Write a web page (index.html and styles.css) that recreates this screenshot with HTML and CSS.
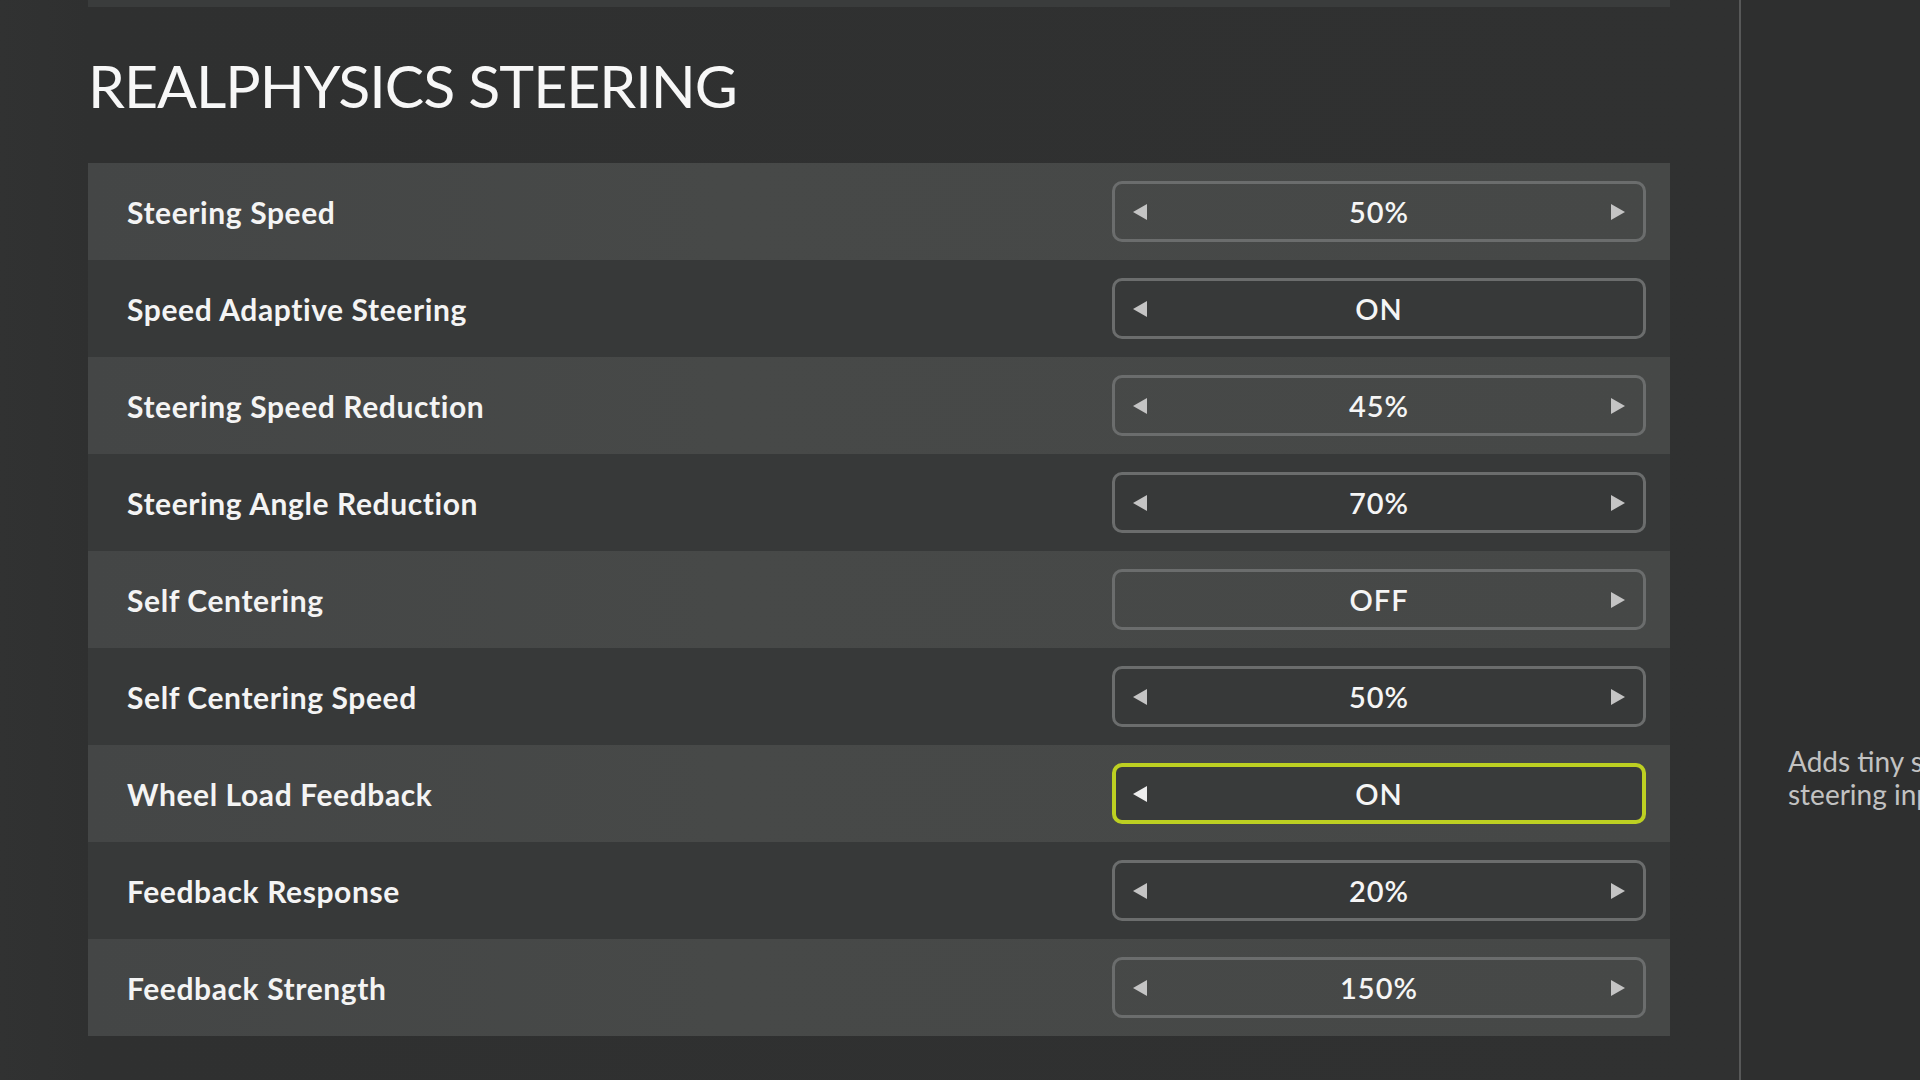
FILE: index.html
```html
<!DOCTYPE html>
<html lang="en">
<head>
<meta charset="utf-8">
<title>RealPhysics Steering</title>
<link rel="stylesheet" href="styles.css">
</head>
<body>
<div class="screen">
  <main class="main">
    <div class="topband"></div>
    <h1 class="title">REALPHYSICS STEERING</h1>
    <div class="list">
      <div class="row light">
        <span class="label">Steering Speed</span>
        <div class="control"><span class="arrow left"></span><span class="value">50%</span><span class="arrow right"></span></div>
      </div>
      <div class="row dark">
        <span class="label">Speed Adaptive Steering</span>
        <div class="control"><span class="arrow left"></span><span class="value">ON</span><span class="arrow none"></span></div>
      </div>
      <div class="row light">
        <span class="label">Steering Speed Reduction</span>
        <div class="control"><span class="arrow left"></span><span class="value">45%</span><span class="arrow right"></span></div>
      </div>
      <div class="row dark">
        <span class="label">Steering Angle Reduction</span>
        <div class="control"><span class="arrow left"></span><span class="value">70%</span><span class="arrow right"></span></div>
      </div>
      <div class="row light">
        <span class="label">Self Centering</span>
        <div class="control"><span class="arrow none"></span><span class="value">OFF</span><span class="arrow right"></span></div>
      </div>
      <div class="row dark">
        <span class="label">Self Centering Speed</span>
        <div class="control"><span class="arrow left"></span><span class="value">50%</span><span class="arrow right"></span></div>
      </div>
      <div class="row light">
        <span class="label">Wheel Load Feedback</span>
        <div class="control focused"><span class="arrow left bright"></span><span class="value">ON</span><span class="arrow none"></span></div>
      </div>
      <div class="row dark">
        <span class="label">Feedback Response</span>
        <div class="control"><span class="arrow left"></span><span class="value">20%</span><span class="arrow right"></span></div>
      </div>
      <div class="row light">
        <span class="label">Feedback Strength</span>
        <div class="control"><span class="arrow left"></span><span class="value">150%</span><span class="arrow right"></span></div>
      </div>
    </div>
  </main>
  <aside class="side">
    <p class="desc">Adds tiny self-aligning forces to the<br>steering input based on wheel load.</p>
  </aside>
</div>
</body>
</html>
```

FILE: styles.css
```css
html, body {
  margin: 0;
  padding: 0;
}
body {
  width: 1920px;
  height: 1080px;
  overflow: hidden;
  background: #2f3030;
  font-family: Lato, "Noto Sans", "Liberation Sans", sans-serif;
  color: #f2f2f2;
}
.screen {
  display: grid;
  grid-template-columns: 1739px 1fr;
  height: 1080px;
}
.main {
  padding: 0 69px 0 88px;
  background: linear-gradient(90deg, #313232 0, #2f3030 88px, #303131 100%);
}
.topband {
  height: 7px;
  background: #3a3c3c;
}
.title {
  margin: 42px 0 40px;
  font-size: 59px;
  line-height: 74px;
  font-weight: 400;
  color: #f7f7f7;
  letter-spacing: -1px;
  white-space: nowrap;
}
.list {
  display: flex;
  flex-direction: column;
}
.row {
  height: 97px;
  display: flex;
  align-items: center;
  justify-content: space-between;
  padding: 0 24px 0 39px;
}
.row.light {
  background: linear-gradient(90deg, #444646 0, #474948 40%, #464847 100%);
}
.row.dark {
  background: #373939;
}
.label {
  font-size: 30px;
  font-weight: 700;
  letter-spacing: 0.6px;
  color: #f4f4f4;
}
.control {
  box-sizing: border-box;
  width: 534px;
  height: 61px;
  border: 3px solid #6b6d6d;
  border-radius: 10px;
  display: grid;
  grid-template-columns: 14px 1fr 14px;
  align-items: center;
  padding: 0 18px;
}
.control.focused {
  border: 4px solid #bdd022;
  padding: 0 17px;
  background: #393b3b;
}
.value {
  text-align: center;
  font-size: 29px;
  font-weight: 600;
  letter-spacing: 1px;
  color: #f5f5f5;
}
.arrow {
  width: 0;
  height: 0;
  border-top: 8px solid transparent;
  border-bottom: 8px solid transparent;
}
.arrow.left {
  border-right: 14px solid #c4c4c4;
}
.arrow.right {
  border-left: 14px solid #c4c4c4;
}
.arrow.bright {
  border-right-color: #eeeeee;
}
.arrow.none {
  border: 0;
}
.side {
  border-left: 2px solid #575858;
  background: #2e2f2f;
  padding: 745px 0 0 47px;
  overflow: hidden;
}
.desc {
  margin: 0;
  width: 560px;
  font-size: 28px;
  line-height: 33px;
  color: #c2c2c2;
  white-space: nowrap;
}
```
